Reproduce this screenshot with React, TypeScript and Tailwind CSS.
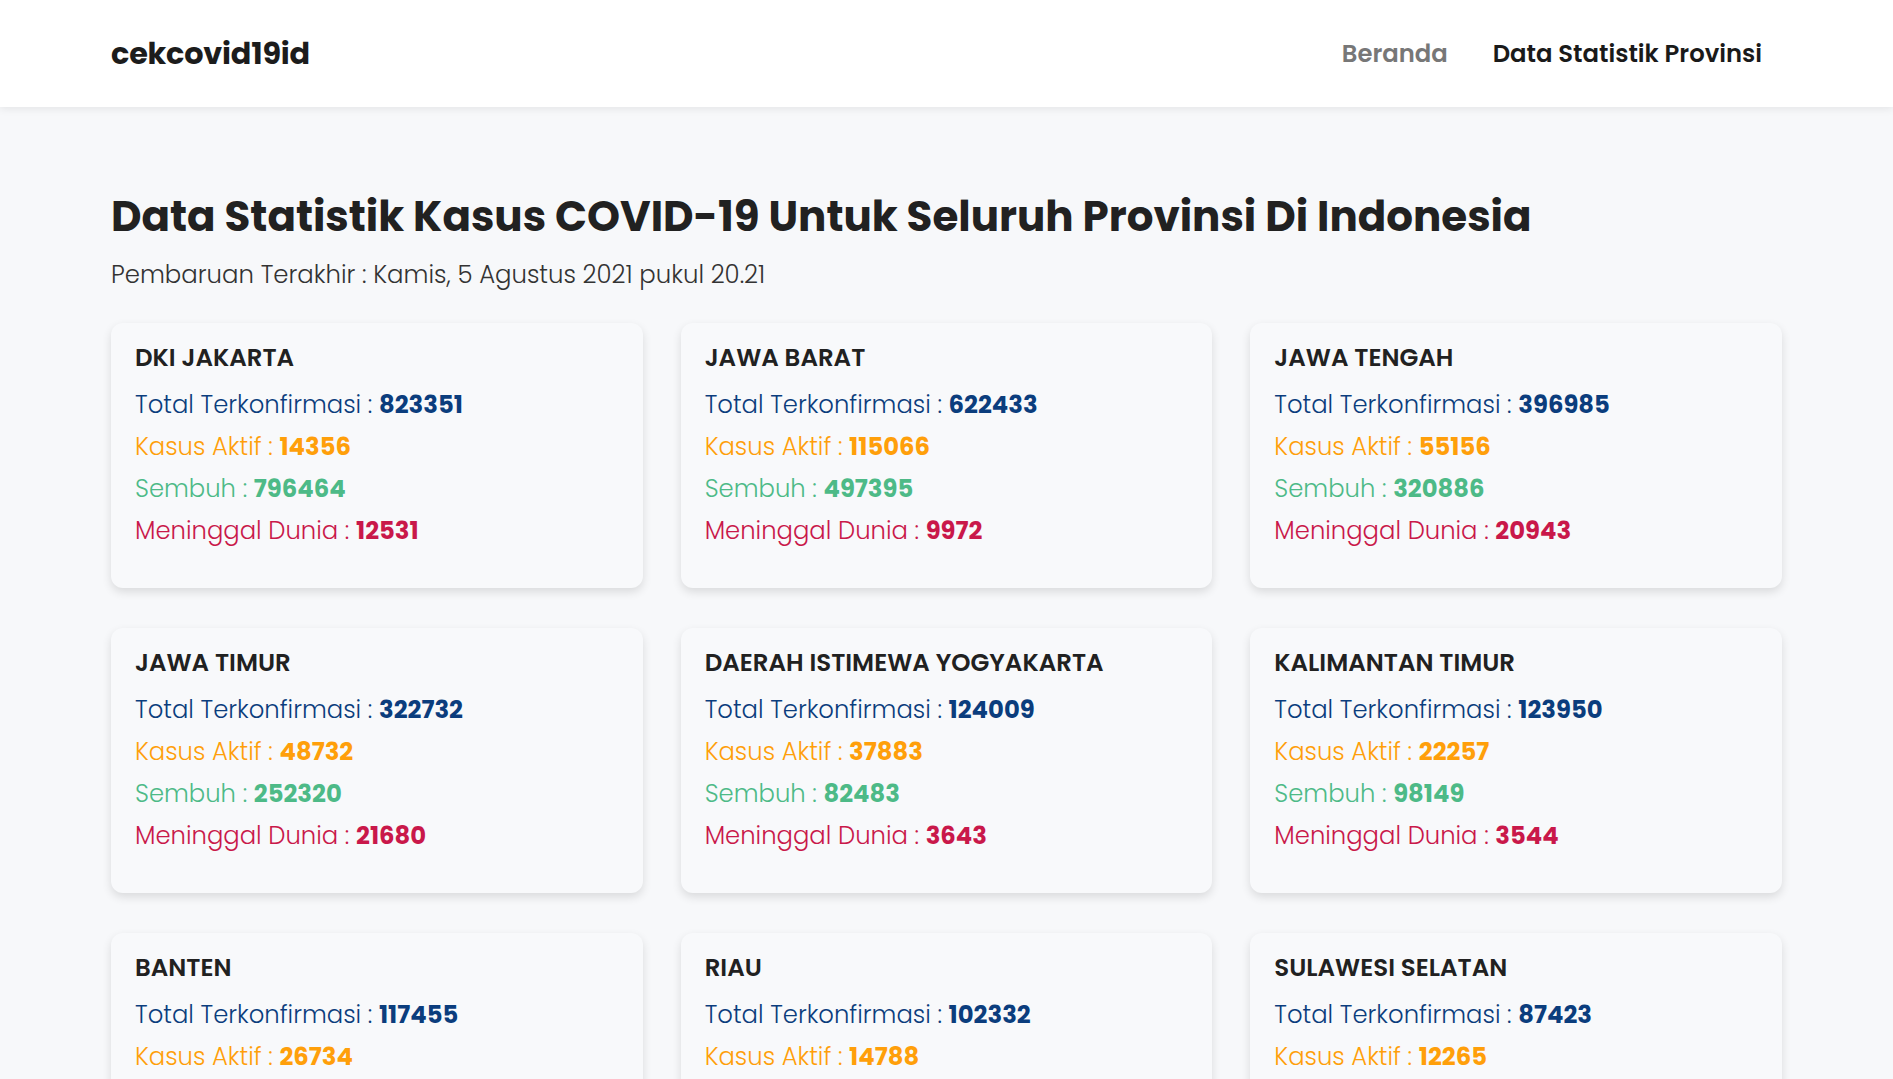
import React from "react";

type Prov = { name: string; total: number; aktif: number; sembuh: number; meninggal: number };

const data: Prov[] = [
  { name: "DKI JAKARTA", total: 823351, aktif: 14356, sembuh: 796464, meninggal: 12531 },
  { name: "JAWA BARAT", total: 622433, aktif: 115066, sembuh: 497395, meninggal: 9972 },
  { name: "JAWA TENGAH", total: 396985, aktif: 55156, sembuh: 320886, meninggal: 20943 },
  { name: "JAWA TIMUR", total: 322732, aktif: 48732, sembuh: 252320, meninggal: 21680 },
  { name: "DAERAH ISTIMEWA YOGYAKARTA", total: 124009, aktif: 37883, sembuh: 82483, meninggal: 3643 },
  { name: "KALIMANTAN TIMUR", total: 123950, aktif: 22257, sembuh: 98149, meninggal: 3544 },
  { name: "BANTEN", total: 117455, aktif: 26734, sembuh: 88101, meninggal: 2620 },
  { name: "RIAU", total: 102332, aktif: 14788, sembuh: 84628, meninggal: 2916 },
  { name: "SULAWESI SELATAN", total: 87423, aktif: 12265, sembuh: 73876, meninggal: 1282 },
];

const font = { fontFamily: "Poppins, Inter, 'Noto Sans', sans-serif" };

function Card({ p }: { p: Prov }) {
  return (
    <div className="bg-[#f8f9fb] rounded-[12px] shadow-[0_4px_10px_rgba(0,0,0,0.12)] px-[24px] pt-[20px] pb-[36px]">
      <div className="text-[24.5px] leading-[30px] font-semibold text-[#212121]">{p.name}</div>
      <div className="mt-[11px] text-[24.3px] leading-[42px] font-light">
        <div className="text-[#0b3d7d]">
          Total Terkonfirmasi : <span className="font-bold">{p.total}</span>
        </div>
        <div className="text-[#ff9f0a]">
          Kasus Aktif : <span className="font-bold">{p.aktif}</span>
        </div>
        <div className="text-[#4dba87]">
          Sembuh : <span className="font-bold">{p.sembuh}</span>
        </div>
        <div className="text-[#c9184a]">
          Meninggal Dunia : <span className="font-bold">{p.meninggal}</span>
        </div>
      </div>
    </div>
  );
}

export default function App() {
  return (
    <div className="min-h-screen bg-[#f7f8fa]" style={font}>
      <header className="h-[107px] bg-white shadow-[0_2px_8px_rgba(0,0,0,0.08)] px-[111px] pt-[1px] flex items-center justify-between relative z-10">
        <div className="text-[30.3px] font-bold text-[#1c1c1c] tracking-[-0.2px]">cekcovid19id</div>
        <nav className="flex items-center gap-[45px] pr-[20px] text-[24.3px] font-semibold">
          <a className="text-[#777777]">Beranda</a>
          <a className="text-[#1a1a1a]">Data Statistik Provinsi</a>
        </nav>
      </header>
      <main className="px-[111px] pt-[86px] pb-[60px]">
        <h1 className="text-[42px] leading-[48px] font-bold text-[#212121]">
          Data Statistik Kasus COVID-19 Untuk Seluruh Provinsi Di Indonesia
        </h1>
        <p className="mt-[19px] text-[24.4px] leading-[30px] font-light text-[#333333]">
          Pembaruan Terakhir : Kamis, 5 Agustus 2021 pukul 20.21
        </p>
        <div className="mt-[33px] grid grid-cols-3 gap-x-[38px] gap-y-[40px]">
          {data.map((p) => (
            <Card key={p.name} p={p} />
          ))}
        </div>
      </main>
    </div>
  );
}
